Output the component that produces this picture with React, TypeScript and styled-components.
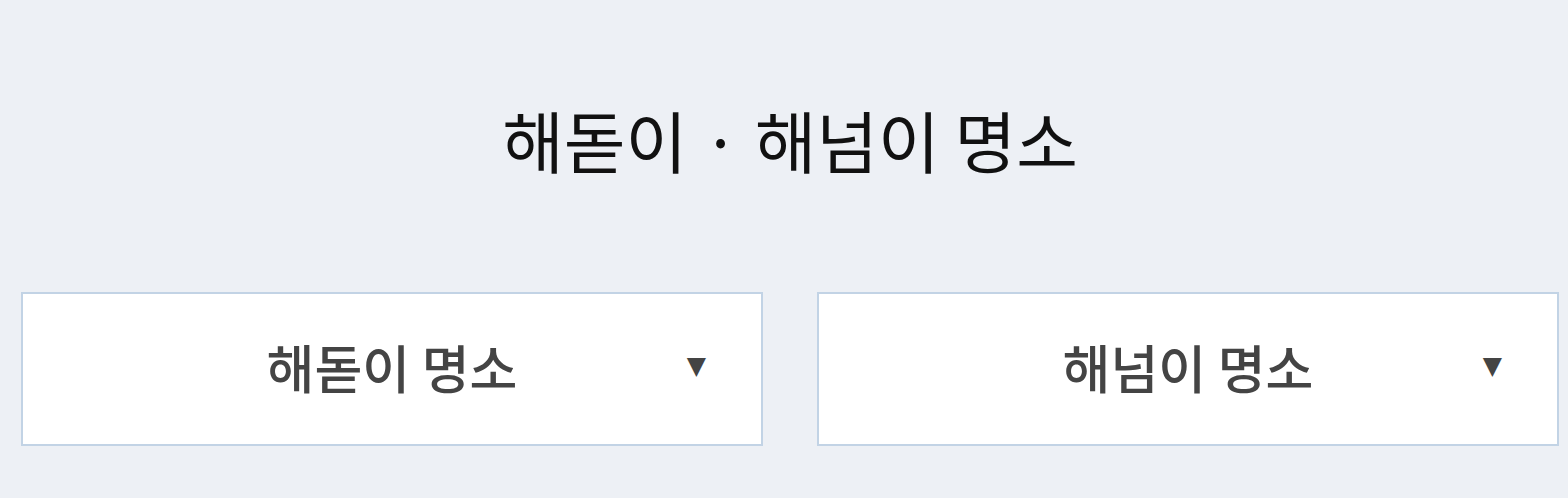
import styled, { createGlobalStyle } from 'styled-components';

const GlobalStyle = createGlobalStyle`
    html, body {
        margin: 0;
        padding: 0;
        background-color: #edf0f5;
    }
    body {
        font-family: "Noto Sans CJK KR", "Noto Sans", sans-serif;
    }
`;

const spots = [
    { id: 'sunrise', label: '해돋이 명소' },
    { id: 'sunset', label: '해넘이 명소' },
];

function App() {
    return (
        <>
            <GlobalStyle />
            <PageWrap>
                <Title>해돋이 · 해넘이 명소</Title>
                <SelectRow>
                    {spots.map((spot) => (
                        <SelectBox key={spot.id}>
                            <SelectLabel>{spot.label}</SelectLabel>
                            <Arrow>▼</Arrow>
                        </SelectBox>
                    ))}
                </SelectRow>
            </PageWrap>
        </>
    );
}

export default App;

const PageWrap = styled.div`
    width: 1568px;
    height: 498px;

    padding: 0 9px 0 21px;
    box-sizing: border-box;

    display: flex;
    flex-direction: column;
`;

const Title = styled.h1`
    margin: 0;
    padding-top: 95px;

    height: 292px;
    box-sizing: border-box;

    text-align: center;
    font-size: 67px;
    font-weight: 400;
    line-height: 88px;
    color: #111;
`;

const SelectRow = styled.div`
    display: grid;
    grid-template-columns: 1fr 1fr;
    gap: 54px;
`;

const SelectBox = styled.div`
    position: relative;

    height: 154px;
    box-sizing: border-box;

    background-color: white;
    border: 2px solid #c2d3e5;

    display: flex;
    align-items: center;
    justify-content: center;
`;

const SelectLabel = styled.span`
    margin-top: -4px;

    font-size: 52px;
    font-weight: 500;
    color: #444;
    line-height: 1;
`;

const Arrow = styled.span`
    position: absolute;
    right: 55px;
    top: 50%;
    transform: translateY(-62%);

    font-family: "DejaVu Sans", sans-serif;
    font-size: 25px;
    color: #444;
`;
